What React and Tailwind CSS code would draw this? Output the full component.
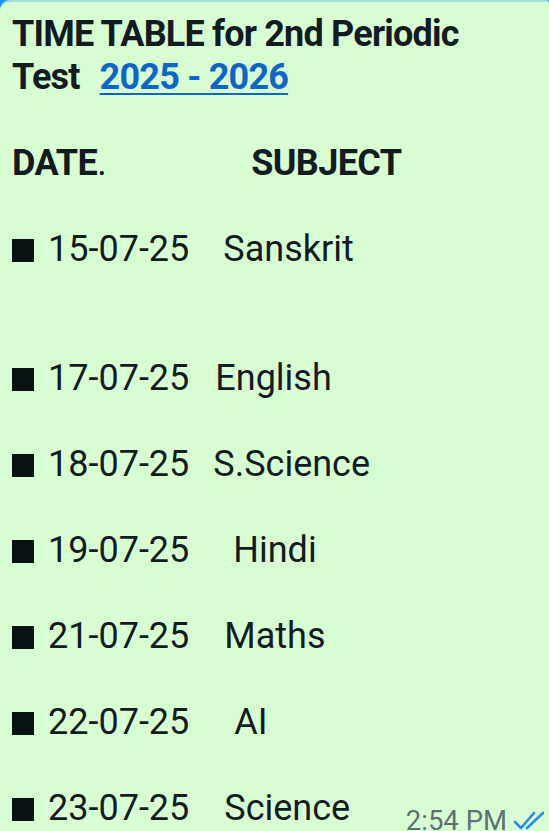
import React from "react";

const rows = [
    { date: "15-07-25", subject: "Sanskrit", gap: "ml-[34px]", after: "mb-[86px]" },
    { date: "17-07-25", subject: "English", gap: "ml-[26px]", after: "mb-[43px]" },
    { date: "18-07-25", subject: "S.Science", gap: "ml-[24px]", after: "mb-[43px]" },
    { date: "19-07-25", subject: "Hindi", gap: "ml-[44px]", after: "mb-[43px]" },
    { date: "21-07-25", subject: "Maths", gap: "ml-[35px]", after: "mb-[43px]" },
    { date: "22-07-25", subject: "AI", gap: "ml-[45px]", after: "mb-[43px]" },
];

const Bullet = () => (
    <span className="inline-block w-[22px] h-[23px] bg-[#0b1216] mr-[14px] translate-y-[1px]"></span>
);

const DoubleTick = () => (
    <svg width="36" height="22" viewBox="0 0 36 22" fill="none" stroke="#2a8be0" strokeWidth="2.6" strokeLinecap="round" strokeLinejoin="round">
        <path d="M2 12 L8 18 L21 3" />
        <path d="M14 18 L30 3" />
    </svg>
);

export default function App() {
    return (
        <div className="w-[549px] h-[831px] overflow-hidden bg-[#2196f3]">
            <div
                className="h-full bg-[#d9fdd3] rounded-tl-[10px] rounded-tr-[3px] border-t-2 border-[#a3ded6] pl-[12px] pr-[0px] pt-[11px] text-[#111b21] text-[36px] leading-[43px]"
                style={{ fontFamily: "Roboto, 'Liberation Sans', sans-serif" }}
            >
                <div className="font-bold tracking-[-0.8px]">
                    <p>TIME TABLE for 2nd Periodic</p>
                    <p>
                        Test
                        <a className="ml-[20px] text-[#0b66c8] underline decoration-[1.5px] underline-offset-[4px]">2025 - 2026</a>
                    </p>
                </div>

                <p className="mt-[43px] font-bold tracking-[-0.6px]">
                    DATE<span className="font-normal">.</span>
                    <span className="ml-[145px]">SUBJECT</span>
                </p>

                <div className="mt-[43px]">
                    {rows.map((row) => (
                        <div key={row.date} className={`flex items-baseline ${row.after}`}>
                            <Bullet />
                            <span>{row.date}</span>
                            <span className={row.gap}>{row.subject}</span>
                        </div>
                    ))}
                    <div className="flex items-baseline">
                        <Bullet />
                        <span>23-07-25</span>
                        <span className="ml-[35px]">Science</span>
                        <span className="ml-auto flex items-center gap-[6px] text-[27.5px] text-[#5f6f74] relative top-[10px]">
                            2:54 PM
                            <DoubleTick />
                        </span>
                    </div>
                </div>
            </div>
        </div>
    );
}
